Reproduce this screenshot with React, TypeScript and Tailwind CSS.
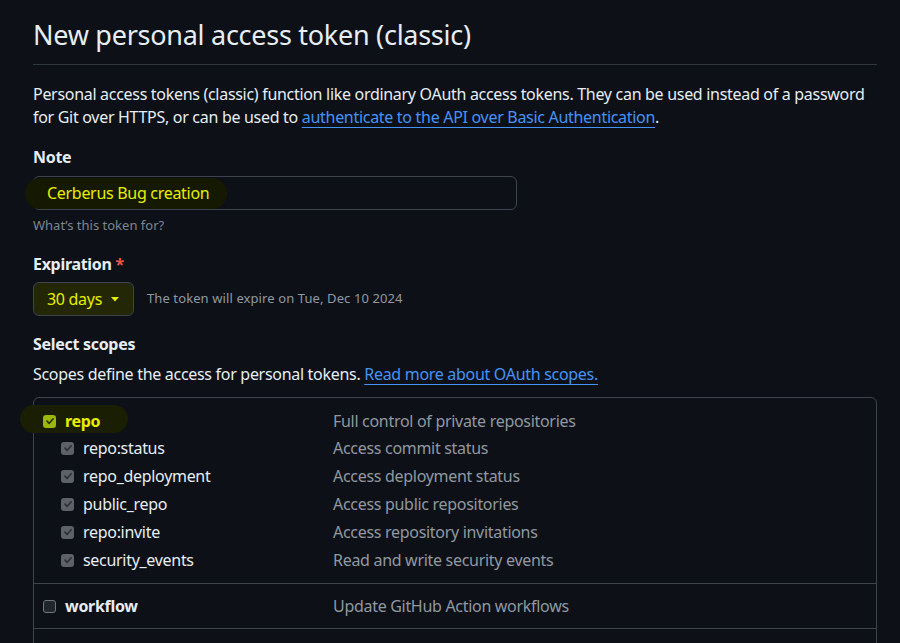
import React from 'react';

const subScopes = [
  { name: 'repo:status', desc: 'Access commit status' },
  { name: 'repo_deployment', desc: 'Access deployment status' },
  { name: 'public_repo', desc: 'Access public repositories' },
  { name: 'repo:invite', desc: 'Access repository invitations' },
  { name: 'security_events', desc: 'Read and write security events' },
];

function Check({ variant }: { variant: 'yellow' | 'grey' | 'empty' }) {
  if (variant === 'empty') {
    return <span className="inline-block w-[13px] h-[13px] rounded-[3px] border border-[#6e7681] bg-[#21262d]" />;
  }
  const box = variant === 'yellow' ? 'bg-[#9cb80a]' : 'bg-[#5d6168]';
  const stroke = variant === 'yellow' ? '#2b3300' : '#2d3137';
  return (
    <span className={`inline-flex items-center justify-center w-[13px] h-[13px] rounded-[3px] ${box}`}>
      <svg width="10" height="10" viewBox="0 0 10 10">
        <path d="M2 5.2 L4.2 7.3 L8.2 2.8" fill="none" stroke={stroke} strokeWidth="1.7" strokeLinecap="round" strokeLinejoin="round" />
      </svg>
    </span>
  );
}

export default function App() {
  return (
    <div className="min-h-screen bg-[#0d1117] text-[#e6edf3] font-['Noto_Sans',sans-serif] tracking-[-0.3px] pl-[33px] pr-[23px] pt-[16px] overflow-hidden">
      <h1 className="text-[27px] leading-[38px] tracking-[-0.27px] font-normal pb-[10px] border-b border-[#30363d]">
        New personal access token (classic)
      </h1>

      <p className="mt-[18px] text-[16px] leading-[23px]">
        Personal access tokens (classic) function like ordinary OAuth access tokens. They can be used instead of a password
        for Git over HTTPS, or can be used to{' '}
        <a className="text-[#4493f8] underline underline-offset-[4px] decoration-[#4493f8]">authenticate to the API over Basic Authentication</a>.
      </p>

      <div className="mt-[16px] text-[16px] leading-[24px] font-bold">Note</div>
      <div className="relative mt-[7px] w-[484px] h-[34px] rounded-[6px] border border-[#3d444d] bg-[#0d1117] flex items-center px-[13px]">
        <span className="absolute left-[-9px] top-[1px] w-[202px] h-[31px] rounded-full bg-[#161901]" />
        <span className="relative text-[16px] text-[#e6ef00]">Cerberus Bug creation</span>
      </div>
      <div className="mt-[6px] text-[13px] leading-[18px] tracking-[0px] text-[#7d8590]">What’s this token for?</div>

      <div className="mt-[18px] text-[16px] leading-[24px] font-bold">
        Expiration <span className="text-[#f85149]">*</span>
      </div>
      <div className="mt-[6px] flex items-center gap-[13px]">
        <div className="relative w-[101px] h-[34px] rounded-[6px] border border-[#3d444d] bg-[#21262d] flex items-center pl-[13px]">
          <span className="absolute inset-0 rounded-[6px] bg-[#232706]" />
          <span className="relative text-[16px] text-[#e6ef00]">30 days</span>
          <svg className="relative ml-[9px]" width="8" height="5" viewBox="0 0 8 5">
            <path d="M0 0 H8 L4 4.5 Z" fill="#e6ef00" />
          </svg>
        </div>
        <span className="text-[13px] tracking-[0.1px] text-[#9198a1]">The token will expire on Tue, Dec 10 2024</span>
      </div>

      <div className="mt-[16px] text-[16px] leading-[24px] font-bold">Select scopes</div>
      <div className="mt-[6px] text-[16px] leading-[24px]">
        Scopes define the access for personal tokens.{' '}
        <a className="text-[#4493f8] underline underline-offset-[4px] decoration-[#4493f8]">Read more about OAuth scopes.</a>
      </div>

      <div className="mt-[11px] border border-[#3d444d] rounded-t-[6px] text-[16px]">
        <div className="pt-[10px] pb-[9px]">
          <div className="relative flex items-center h-[26px]">
            <span className="absolute left-[-14px] top-[-3px] w-[108px] h-[28px] rounded-full bg-[#1a1e03]" />
            <div className="relative w-[299px] flex items-center pl-[9px] gap-[9px]">
              <Check variant="yellow" />
              <span className="font-bold text-[#e6ef00]">repo</span>
            </div>
            <span className="text-[#9198a1]">Full control of private repositories</span>
          </div>
          {subScopes.map((s) => (
            <div key={s.name} className="flex items-center h-[28px]">
              <div className="w-[299px] flex items-center pl-[27px] gap-[9px]">
                <Check variant="grey" />
                <span>{s.name}</span>
              </div>
              <span className="text-[#9198a1]">{s.desc}</span>
            </div>
          ))}
        </div>
        <div className="border-t border-[#3d444d] h-[45px] flex items-center">
          <div className="w-[299px] flex items-center pl-[9px] gap-[9px]">
            <Check variant="empty" />
            <span className="font-bold">workflow</span>
          </div>
          <span className="text-[#9198a1]">Update GitHub Action workflows</span>
        </div>
        <div className="border-t border-[#3d444d] h-[30px]" />
      </div>
    </div>
  );
}
